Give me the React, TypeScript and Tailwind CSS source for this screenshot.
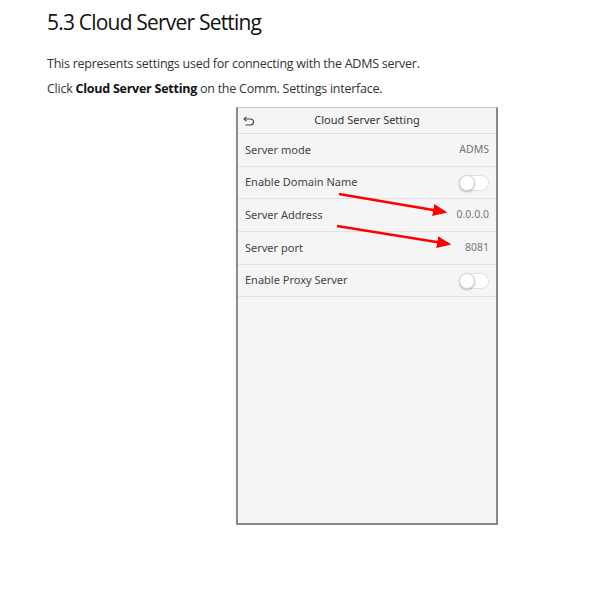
import React from "react";

const rows = [
  { label: "Server mode", value: "ADMS" },
  { label: "Enable Domain Name", toggle: true },
  { label: "Server Address", value: "0.0.0.0" },
  { label: "Server port", value: "8081" },
  { label: "Enable Proxy Server", toggle: true },
];

function Toggle() {
  return (
    <div className="relative w-[30px] h-[16px] rounded-full bg-white border border-[#e2e2e2]">
      <div className="absolute -left-[1px] -top-[1px] w-[16px] h-[16px] rounded-full bg-white border border-[#d6d6d6] shadow-[0_1px_2px_rgba(0,0,0,0.25)]" />
    </div>
  );
}

export default function App() {
  return (
    <div className="w-[593px] h-[590px] bg-white font-['Open_Sans',sans-serif] text-[#222]">
      {/* Page text */}
      <div className="pl-[47px] pt-[8px]">
        <h1 className="text-[21px] leading-[28px] tracking-[-0.8px] text-[#111]">5.3 Cloud Server Setting</h1>
        <p className="mt-[20px] text-[12.5px] leading-[16px] tracking-[-0.25px] text-[#333]">
          This represents settings used for connecting with the ADMS server.
        </p>
        <p className="mt-[9px] text-[12.5px] leading-[16px] tracking-[-0.25px] text-[#333]">
          Click <span className="font-bold text-[#111]">Cloud Server Setting</span> on the Comm. Settings interface.
        </p>
      </div>

      {/* Device screen */}
      <div className="relative ml-[236px] mt-[10px] w-[262px] h-[418px] bg-[#f5f5f5] border-x-2 border-b-2 border-t border-x-[#8a8a8a] border-b-[#8a8a8a] border-t-[#c8c8c8] font-['Noto_Sans',sans-serif]">
        <div className="relative flex items-center justify-center h-[26px] border-b border-[#e0e0e0]">
          <svg className="absolute left-[5px] top-[8px]" width="12" height="10" viewBox="0 0 12 10" fill="none" stroke="#444" strokeWidth="1.1">
            <path d="M3.5 0.8 1 3l2.5 2.2" />
            <path d="M1 3h6.5a3 3 0 0 1 0 6H2.5" />
          </svg>
          <span className="text-[11px] text-[#333]">Cloud Server Setting</span>
        </div>
        {rows.map((r) => (
          <div key={r.label} className="flex items-center justify-between h-[32.7px] pl-[7px] pr-[7px] border-b border-[#e2e2e2]">
            <span className="text-[11px] text-[#444]">{r.label}</span>
            {r.toggle ? <Toggle /> : <span className="text-[10.5px] text-[#777]">{r.value}</span>}
          </div>
        ))}

        {/* Red annotation arrows */}
        <svg className="absolute left-0 top-0 pointer-events-none" width="262" height="200" viewBox="0 0 262 200">
          <defs>
            <marker id="ah" markerWidth="6" markerHeight="5" refX="5" refY="2.5" orient="auto" markerUnits="strokeWidth">
              <path d="M0 0 6 2.5 0 5z" fill="#ff0000" />
            </marker>
          </defs>
          <line x1="101" y1="86" x2="207" y2="104" stroke="#ff0000" strokeWidth="2.4" markerEnd="url(#ah)" />
          <line x1="99" y1="118" x2="211" y2="136" stroke="#ff0000" strokeWidth="2.4" markerEnd="url(#ah)" />
        </svg>
      </div>
    </div>
  );
}
